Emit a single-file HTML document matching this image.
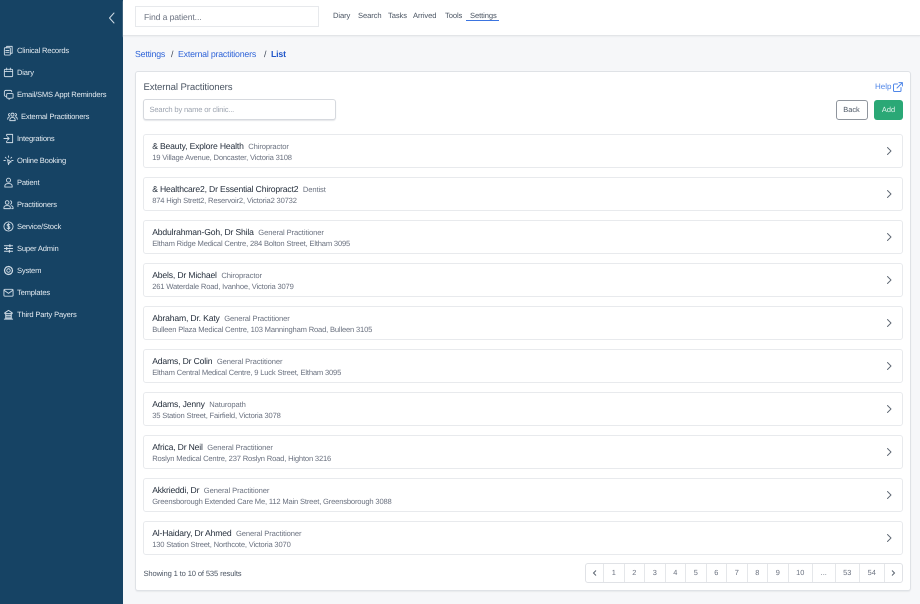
<!DOCTYPE html>
<html lang="en">
<head>
<meta charset="utf-8">
<title>External Practitioners</title>
<style>
*{box-sizing:border-box}
html,body{margin:0;padding:0}
body{width:920px;height:604px;overflow:hidden;position:relative;background:#f6f7f9;font-family:"Liberation Sans",sans-serif;color:#374151;filter:blur(.25px);text-rendering:geometricPrecision}
.a{position:absolute;white-space:nowrap}
#side{position:absolute;left:0;top:0;width:123px;height:604px;background:#164364}
#side .t{position:absolute;left:17px;color:#e4ebf1;font-size:7.6px;letter-spacing:-.18px;line-height:12px;white-space:nowrap;margin-top:1px}
#side svg{position:absolute;width:11px;height:11px;fill:none;stroke:#cfdbe5;stroke-width:1;stroke-linecap:round;stroke-linejoin:round;margin-top:1px}
#top{position:absolute;left:123px;top:0;width:797px;height:36px;background:#fff;border-bottom:1px solid #e3e5e8;box-shadow:0 1px 1px #eceef0}
#find{position:absolute;left:135px;top:5.5px;width:184px;height:21px;background:#fff;border:1px solid #e7e9ec;color:#6b7280;font-size:8.6px;letter-spacing:-.1px;line-height:20px;padding-left:8px}
.nav{position:absolute;top:10px;font-size:7.6px;letter-spacing:-.1px;line-height:12px;color:#4b5563;white-space:nowrap}
.bc{position:absolute;top:47.5px;font-size:8.8px;letter-spacing:-.21px;line-height:13px;white-space:nowrap}
#card{position:absolute;left:135px;top:71px;width:776px;height:519.5px;background:#fff;border:1px solid #dfe2e6;border-radius:3px;box-shadow:0 1px 1px #e8eaed}
.row{position:absolute;left:143.2px;width:760px;height:34.5px;background:#fff;border:1px solid #e8eaed;border-radius:3px}
.row .n{position:absolute;left:8px;top:5px;font-size:8.6px;letter-spacing:-.16px;line-height:12px;color:#1f2937;white-space:nowrap}
.row .n span{font-size:7.6px;letter-spacing:-.1px;color:#6b7280;margin-left:4.5px}
.row .d{position:absolute;left:8px;top:17px;font-size:7.6px;letter-spacing:-.18px;line-height:11px;color:#6b7280;white-space:nowrap}
.row svg{position:absolute;left:740.5px;top:11.5px;width:8px;height:10px;fill:none;stroke:#5b6470;stroke-width:.9;stroke-linecap:round;stroke-linejoin:round}
#pg{position:absolute;left:584.5px;top:563px;width:318px;height:19.5px;background:#fff;border:1px solid #e0e2e6;border-radius:3px}
#pg div{position:absolute;top:0;height:17.5px;line-height:17.5px;text-align:center;font-size:7.4px;color:#6b7280;border-right:1px solid #e5e7ea}
#pg div:last-child{border-right:0}
#pg svg{display:block;width:6px;height:8px;margin-top:5px;fill:none;stroke:#5b6470;stroke-width:1}
</style>
</head>
<body>
<div id="side">
<svg style="left:106px;top:11px;width:12px;height:12px" viewBox="0 0 12 12"><path d="M8 1 3.500 6 8 11"/></svg>

<svg style="left:3px;top:44px" viewBox="0 0 12 12"><rect x="1.500" y="3" width="6.500" height="8" rx=".8"/><path d="M4 3V1.500h6V9H8M3 6h3.500M3 8h3.500"/></svg>
<div class="t" style="top:44px">Clinical Records</div>

<svg style="left:3px;top:66px" viewBox="0 0 12 12"><rect x="1.500" y="2.500" width="9" height="8" rx="1"/><path d="M1.500 5h9M4 1.200v2M8 1.200v2"/></svg>
<div class="t" style="top:66px">Diary</div>

<svg style="left:3px;top:88px" viewBox="0 0 12 12"><path d="M4 8H2.500a1.500 1.500 0 0 1-1-1V3a1.500 1.500 0 0 1 1.500-1.500h5A1.500 1.500 0 0 1 9.500 3"/><path d="M5 5h5a1 1 0 0 1 1 1v3a1 1 0 0 1-1 1H8l-1.500 1.300V10H5a1 1 0 0 1-1-1V6a1 1 0 0 1 1-1z"/></svg>
<div class="t" style="top:88px">Email/SMS Appt Reminders</div>

<svg style="left:7px;top:110px" viewBox="0 0 12 12"><circle cx="6" cy="4" r="1.700"/><path d="M3 10.500c0-2.500 1.200-3.500 3-3.500s3 1 3 3.500zM2.800 2.800a1.200 1.200 0 1 0 0 2.400M9.200 2.800a1.200 1.200 0 1 1 0 2.400M.8 9c0-1.700.6-2.500 1.900-2.700M11.200 9c0-1.700-.6-2.500-1.900-2.700"/></svg>
<div class="t" style="top:110px;left:21px">External Practitioners</div>

<svg style="left:3px;top:132px" viewBox="0 0 12 12"><path d="M4 3V1.500h6.500v9H4V9M1 6h5.500M4.800 4.200 6.700 6 4.800 7.800"/></svg>
<div class="t" style="top:132px">Integrations</div>

<svg style="left:3px;top:154px" viewBox="0 0 12 12"><path d="M6 1v1.500M2.500 2.500l1 1M9.500 2.500l-1 1M1 6h1.500M9.500 6H11M5 5l1 5.500 1-2.500 2-.5z"/></svg>
<div class="t" style="top:154px">Online Booking</div>

<svg style="left:3px;top:176px" viewBox="0 0 12 12"><circle cx="6" cy="3.500" r="2.200"/><path d="M2 11V9.800C2 8 3.700 7.200 6 7.200s4 .8 4 2.600V11z"/></svg>
<div class="t" style="top:176px">Patient</div>

<svg style="left:3px;top:198px" viewBox="0 0 12 12"><circle cx="4.500" cy="3.800" r="2"/><path d="M1 10.500V9.500C1 8 2.500 7.200 4.500 7.200S8 8 8 9.500v1zM8 2a1.900 1.900 0 0 1 0 3.700M9 7.300c1.200.3 2 1 2 2.200v1H9.500"/></svg>
<div class="t" style="top:198px">Practitioners</div>

<svg style="left:3px;top:220px" viewBox="0 0 12 12"><circle cx="6" cy="6" r="5"/><path d="M7.500 4.300C7.200 3.700 6.600 3.500 6 3.500c-.9 0-1.500.5-1.500 1.200 0 1.600 3 .8 3 2.500 0 .8-.7 1.300-1.500 1.300-.7 0-1.300-.3-1.600-.9M6 2.700v6.600"/></svg>
<div class="t" style="top:220px">Service/Stock</div>

<svg style="left:3px;top:242px" viewBox="0 0 12 12"><path d="M1.500 3h9M1.500 6h9M1.500 9h9"/><path d="M7.500 2v2M4 5v2M7 8v2" stroke-width="1.400"/></svg>
<div class="t" style="top:242px">Super Admin</div>

<svg style="left:3px;top:264px" viewBox="0 0 12 12"><circle cx="6" cy="6" r="1.900"/><circle cx="6" cy="6" r="4.300" stroke-dasharray="2.200 1.100" stroke-width="1.400"/></svg>
<div class="t" style="top:264px">System</div>

<svg style="left:3px;top:286px" viewBox="0 0 12 12"><rect x="1" y="2.500" width="10" height="7.500" rx="1"/><path d="M1.200 3.500 6 7l4.800-3.500"/></svg>
<div class="t" style="top:286px">Templates</div>

<svg style="left:3px;top:307.500px" viewBox="0 0 12 12"><path d="M1.500 11h9M2 4.200 6 1.500l4 2.700v.8H2zM3 5v5.500h6V5M3 7h6M3 8.800h6" stroke-width="1.100"/></svg>
<div class="t" style="top:307.500px">Third Party Payers</div>
</div>

<div id="top"></div>
<div id="find">Find a patient...</div>
<div class="nav" style="left:333px">Diary</div>
<div class="nav" style="left:358px">Search</div>
<div class="nav" style="left:388px">Tasks</div>
<div class="nav" style="left:413px">Arrived</div>
<div class="nav" style="left:445px">Tools</div>
<div class="nav" style="left:470px">Settings</div>
<div class="a" style="left:466px;top:20px;width:33px;height:1px;background:#3b74e0"></div>

<div class="bc" style="left:135px;color:#2f64d8">Settings</div>
<div class="bc" style="left:171px;color:#374151">/</div>
<div class="bc" style="left:178px;color:#2f64d8">External practitioners</div>
<div class="bc" style="left:264px;color:#374151">/</div>
<div class="bc" style="left:271px;color:#2257c9;font-weight:bold">List</div>

<div id="card"></div>
<div class="a" style="left:143.500px;top:80.500px;font-size:9.600px;letter-spacing:-.1px;line-height:14px;color:#4b5563">External Practitioners</div>
<div class="a" style="left:875px;top:81px;font-size:8px;line-height:12px;color:#4f86e8">Help</div>
<svg class="a" style="left:893px;top:82px;width:10px;height:10px;fill:none;stroke:#4f86e8;stroke-width:1;stroke-linecap:round;stroke-linejoin:round" viewBox="0 0 10 10"><path d="M8 5.500V8.500a1 1 0 0 1-1 1H1.500a1 1 0 0 1-1-1V3a1 1 0 0 1 1-1h3M6 .6h3.400V4M9.200.8 4 6"/></svg>

<div class="a" style="left:143px;top:99px;width:192.500px;height:20.500px;background:#fff;border:1px solid #d6d9de;border-radius:3px;box-shadow:0 1px 1px #e5e7ea;font-size:7.600px;letter-spacing:-.18px;line-height:20px;padding-left:5.500px;color:#9ca3af">Search by name or clinic...</div>

<div class="a" style="left:835.500px;top:100px;width:32px;height:19.500px;background:#fff;border:1px solid #8f959d;border-radius:3px;font-size:7.400px;line-height:17.500px;text-align:center;color:#4b5563">Back</div>
<div class="a" style="left:874px;top:100px;width:29px;height:19.500px;background:#2aa876;border-radius:3px;font-size:7.400px;line-height:19.500px;text-align:center;color:#e6f6ef">Add</div>

<div class="row" style="top:133.500px"><div class="n">&amp; Beauty, Explore Health<span>Chiropractor</span></div><div class="d">19 Village Avenue, Doncaster, Victoria 3108</div><svg viewBox="0 0 8 10"><path d="M2.500 1.500 6 5 2.500 8.500"/></svg></div>
<div class="row" style="top:176.500px"><div class="n">&amp; Healthcare2, Dr Essential Chiropract2<span>Dentist</span></div><div class="d">874 High Strett2, Reservoir2, Victoria2 30732</div><svg viewBox="0 0 8 10"><path d="M2.500 1.500 6 5 2.500 8.500"/></svg></div>
<div class="row" style="top:219.500px"><div class="n">Abdulrahman-Goh, Dr Shila<span>General Practitioner</span></div><div class="d">Eltham Ridge Medical Centre, 284 Bolton Street, Eltham 3095</div><svg viewBox="0 0 8 10"><path d="M2.500 1.500 6 5 2.500 8.500"/></svg></div>
<div class="row" style="top:262.500px"><div class="n">Abels, Dr Michael<span>Chiropractor</span></div><div class="d">261 Waterdale Road, Ivanhoe, Victoria 3079</div><svg viewBox="0 0 8 10"><path d="M2.500 1.500 6 5 2.500 8.500"/></svg></div>
<div class="row" style="top:305.500px"><div class="n">Abraham, Dr. Katy<span>General Practitioner</span></div><div class="d">Bulleen Plaza Medical Centre, 103 Manningham Road, Bulleen 3105</div><svg viewBox="0 0 8 10"><path d="M2.500 1.500 6 5 2.500 8.500"/></svg></div>
<div class="row" style="top:348.500px"><div class="n">Adams, Dr Colin<span>General Practitioner</span></div><div class="d">Eltham Central Medical Centre, 9 Luck Street, Eltham 3095</div><svg viewBox="0 0 8 10"><path d="M2.500 1.500 6 5 2.500 8.500"/></svg></div>
<div class="row" style="top:391.500px"><div class="n">Adams, Jenny<span>Naturopath</span></div><div class="d">35 Station Street, Fairfield, Victoria 3078</div><svg viewBox="0 0 8 10"><path d="M2.500 1.500 6 5 2.500 8.500"/></svg></div>
<div class="row" style="top:434.500px"><div class="n">Africa, Dr Neil<span>General Practitioner</span></div><div class="d">Roslyn Medical Centre, 237 Roslyn Road, Highton 3216</div><svg viewBox="0 0 8 10"><path d="M2.500 1.500 6 5 2.500 8.500"/></svg></div>
<div class="row" style="top:477.500px"><div class="n">Akkrieddi, Dr<span>General Practitioner</span></div><div class="d">Greensborough Extended Care Me, 112 Main Street, Greensborough 3088</div><svg viewBox="0 0 8 10"><path d="M2.500 1.500 6 5 2.500 8.500"/></svg></div>
<div class="row" style="top:520.500px"><div class="n">Al-Haidary, Dr Ahmed<span>General Practitioner</span></div><div class="d">130 Station Street, Northcote, Victoria 3070</div><svg viewBox="0 0 8 10"><path d="M2.500 1.500 6 5 2.500 8.500"/></svg></div>

<div class="a" style="left:143.500px;top:567.500px;font-size:7.600px;letter-spacing:-.14px;line-height:12px;color:#4b5563">Showing 1 to 10 of 535 results</div>

<div id="pg">
<div style="left:0;width:18.500px"><svg style="margin-left:6px" viewBox="0 0 6 8"><path d="M4 1.500 1.500 4 4 6.500"/></svg></div>
<div style="left:18.500px;width:20.500px">1</div>
<div style="left:39px;width:20.500px">2</div>
<div style="left:59.500px;width:20.500px">3</div>
<div style="left:80px;width:20.500px">4</div>
<div style="left:100.500px;width:20.500px">5</div>
<div style="left:121px;width:20.500px">6</div>
<div style="left:141.500px;width:20.500px">7</div>
<div style="left:162px;width:20.500px">8</div>
<div style="left:182.500px;width:20.500px">9</div>
<div style="left:203px;width:24.500px">10</div>
<div style="left:227.500px;width:22.500px">...</div>
<div style="left:250px;width:24.500px">53</div>
<div style="left:274.500px;width:24.500px">54</div>
<div style="left:299px;width:17px"><svg style="margin-left:5.500px" viewBox="0 0 6 8"><path d="M2 1.500 4.500 4 2 6.500"/></svg></div>
</div>
</body>
</html>
